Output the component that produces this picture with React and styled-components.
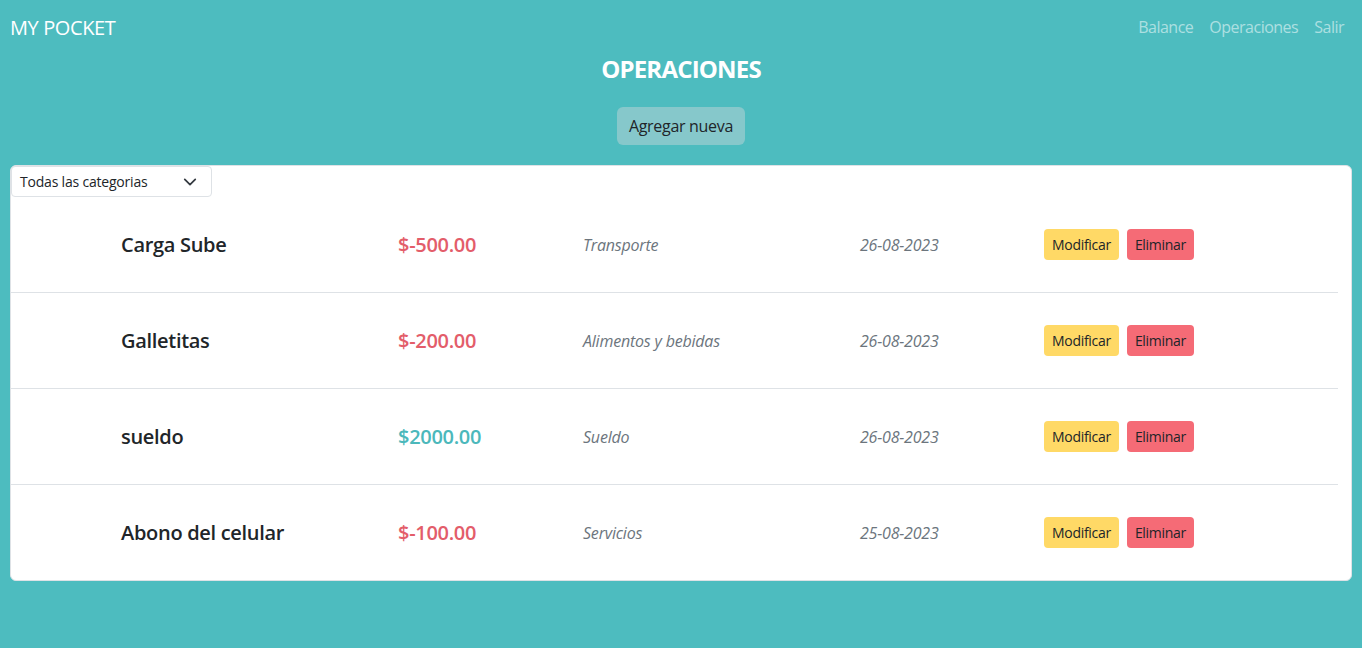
import React from "react";
import styled, { createGlobalStyle } from "styled-components";

const operations = [
  { id: 1, name: "Carga Sube", amount: "$-500.00", type: "out", category: "Transporte", date: "26-08-2023" },
  { id: 2, name: "Galletitas", amount: "$-200.00", type: "out", category: "Alimentos y bebidas", date: "26-08-2023" },
  { id: 3, name: "sueldo", amount: "$2000.00", type: "in", category: "Sueldo", date: "26-08-2023" },
  { id: 4, name: "Abono del celular", amount: "$-100.00", type: "out", category: "Servicios", date: "25-08-2023" },
];

const GlobalStyle = createGlobalStyle`
  * {
    box-sizing: border-box;
  }

  body {
    margin: 0;
    background: #4dbcbf;
    font-family: "Open Sans", "Noto Sans", "Liberation Sans", sans-serif;
    color: #212529;
  }
`;

const Navbar = styled.header`
  display: flex;
  align-items: center;
  justify-content: space-between;
  height: 54px;
  padding: 0 10px;
`;

const Brand = styled.span`
  color: #fff;
  font-size: 20px;
  letter-spacing: -0.4px;
`;

const NavLinks = styled.nav`
  display: flex;
`;

const NavLink = styled.a`
  color: rgba(255, 255, 255, 0.55);
  font-size: 16px;
  letter-spacing: -0.5px;
  padding: 0 8px;
  text-decoration: none;
`;

const Title = styled.h1`
  margin: 0;
  text-align: center;
  color: #fff;
  font-size: 24px;
  font-weight: 700;
  letter-spacing: -0.8px;
  line-height: 29px;
`;

const Actions = styled.div`
  display: flex;
  justify-content: center;
  margin-top: 24px;
`;

const AddButton = styled.button`
  height: 38px;
  padding: 0 12px;
  border: none;
  border-radius: 6px;
  background: #86c8cb;
  color: #212529;
  font-family: inherit;
  font-size: 16px;
  letter-spacing: -0.3px;
`;

const Card = styled.section`
  margin: 20px 10px 0;
  background: #fff;
  border: 1px solid #dee2e6;
  border-radius: 6px;
  padding-right: 13px;
`;

const Select = styled.div`
  display: flex;
  align-items: center;
  justify-content: space-between;
  width: 201px;
  height: 31px;
  padding: 0 14px 0 8px;
  border: 1px solid #dee2e6;
  border-radius: 4px;
  font-size: 14px;
  letter-spacing: -0.2px;
  color: #212529;
`;

const List = styled.ul`
  list-style: none;
  margin: 0;
  padding: 0;
`;

const Row = styled.li`
  display: grid;
  grid-template-columns: 277px 185px 277px 184px auto;
  align-items: center;
  height: 96px;
  padding-left: 110px;
  border-bottom: 1px solid #dee2e6;

  &:last-child {
    height: 95px;
    border-bottom: none;
  }
`;

const Name = styled.span`
  font-size: 20px;
  font-weight: 600;
  letter-spacing: -0.3px;
  color: #212529;
`;

const Amount = styled.span`
  font-size: 20px;
  font-weight: 600;
  letter-spacing: -0.3px;
  color: ${({ $type }) => ($type === "in" ? "#4bb8bb" : "#e35d6a")};
`;

const Muted = styled.span`
  font-size: 16px;
  font-style: italic;
  letter-spacing: -0.2px;
  color: #6c757d;
`;

const Buttons = styled.div`
  display: flex;
  gap: 8px;
`;

const SmallButton = styled.button`
  height: 31px;
  padding: 0 8px;
  border: none;
  border-radius: 4px;
  font-family: inherit;
  font-size: 14px;
  letter-spacing: -0.3px;
  color: #212529;
  background: ${({ $variant }) => ($variant === "danger" ? "#f56b76" : "#ffd966")};
`;

const Chevron = () => (
  <svg width="14" height="14" viewBox="0 0 16 16" fill="none" stroke="#343a40" strokeWidth="2" strokeLinecap="round" strokeLinejoin="round">
    <path d="M2 5l6 6 6-6" />
  </svg>
);

export default function App() {
  return (
    <>
      <GlobalStyle />
      <Navbar>
        <Brand>MY POCKET</Brand>
        <NavLinks>
          <NavLink href="#">Balance</NavLink>
          <NavLink href="#">Operaciones</NavLink>
          <NavLink href="#">Salir</NavLink>
        </NavLinks>
      </Navbar>
      <Title>OPERACIONES</Title>
      <Actions>
        <AddButton>Agregar nueva</AddButton>
      </Actions>
      <Card>
        <Select>
          <span>Todas las categorias</span>
          <Chevron />
        </Select>
        <List>
          {operations.map((op) => (
            <Row key={op.id}>
              <Name>{op.name}</Name>
              <Amount $type={op.type}>{op.amount}</Amount>
              <Muted>{op.category}</Muted>
              <Muted>{op.date}</Muted>
              <Buttons>
                <SmallButton>Modificar</SmallButton>
                <SmallButton $variant="danger">Eliminar</SmallButton>
              </Buttons>
            </Row>
          ))}
        </List>
      </Card>
    </>
  );
}
